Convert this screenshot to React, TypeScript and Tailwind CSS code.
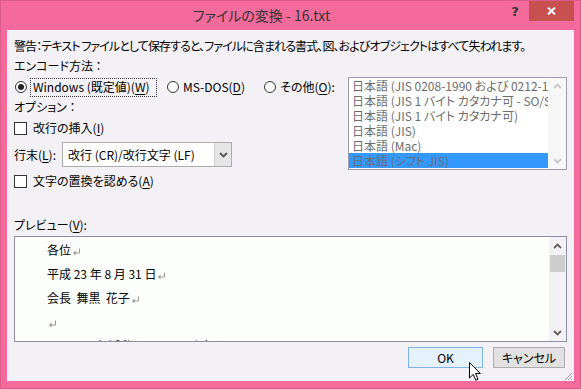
import React from 'react';

const U = ({ children }: { children: React.ReactNode }) => (
  <span className="underline underline-offset-[2px]">{children}</span>
);

const Radio = ({ checked }: { checked?: boolean }) => (
  <span className="w-[12px] h-[12px] rounded-full border border-[#333] bg-white flex items-center justify-center shrink-0">
    {checked && <span className="w-[6px] h-[6px] rounded-full bg-[#222]" />}
  </span>
);

const Check = () => <span className="w-[13px] h-[13px] border border-[#333] bg-white shrink-0" />;

const Chevron = ({ up, color }: { up?: boolean; color: string }) => (
  <svg width="9" height="6" viewBox="0 0 9 6" className={up ? '' : 'rotate-180'}>
    <path d="M1 5 L4.5 1.5 L8 5" fill="none" stroke={color} strokeWidth="1.8" />
  </svg>
);

const Ret = () => (
  <svg width="9" height="8" viewBox="0 0 9 8" className="inline-block ml-[1px] align-[-1px]">
    <path d="M7.5 0.5 V5 H1.5" fill="none" stroke="#999" strokeWidth="1" />
    <path d="M1 5 L3.5 2.5 V7.5 Z" fill="#999" />
  </svg>
);

const encodings = [
  '日本語 (JIS 0208-1990 および 0212-1990)',
  '日本語 (JIS 1 バイト カタカナ可 - SO/SI)',
  '日本語 (JIS 1 バイト カタカナ可)',
  '日本語 (JIS)',
  '日本語 (Mac)',
  '日本語 (シフト JIS)',
];

export default function App() {
  return (
    <div className="w-[581px] h-[389px] bg-[#f36a9b] border border-[#dc5a8a] flex flex-col relative overflow-hidden font-['Noto_Sans_CJK_JP',sans-serif] [font-feature-settings:'palt'] text-[12px] text-black">
      {/* title bar */}
      <div className="h-[29px] flex items-start shrink-0">
        <div className="flex-1 h-full pl-[14px] flex items-center justify-center text-[14px] text-[#333]">
          ファイルの変換 - 16.txt
        </div>
        <div className="w-[14px] h-[22px] mr-[7px] flex items-center justify-center font-['DejaVu_Sans',sans-serif] font-bold text-[13px] text-[#333]">
          ?
        </div>
        <div className="w-[45px] h-[20px] mr-[6px] bg-[#c75050] flex items-center justify-center">
          <svg width="9" height="8" viewBox="0 0 9 8">
            <path d="M1 0.5 L8 7.5 M8 0.5 L1 7.5" stroke="white" strokeWidth="2" />
          </svg>
        </div>
      </div>

      {/* client */}
      <div className="mx-[6px] h-[351px] bg-[#f3f1f5] px-[7px] pt-[8px] flex flex-col relative">
        <div className="h-[16px] leading-[16px] whitespace-nowrap tracking-[-0.9px]">
          警告：テキスト ファイルとして保存すると、ファイルに含まれる書式、図、およびオブジェクトはすべて失われます。
        </div>
        <div className="mt-[4px] h-[16px] leading-[16px]">エンコード方法 ：</div>

        <div className="mt-[3px] flex">
          <div className="flex-1 pt-[2px] flex flex-col">
            <div className="h-[16px] flex items-center">
              <span className="ml-[1px]">
                <Radio checked />
              </span>
              <span className="ml-[3px] w-[127px] h-[19px] border border-dotted border-[#333] px-[2px] flex items-center whitespace-nowrap">
                <span>
                  Windows (既定値)(<U>W</U>)
                </span>
              </span>
              <span className="ml-[10px] w-[97px] flex items-center gap-[4px] whitespace-nowrap">
                <Radio />
                <span>
                  MS-DOS(<U>D</U>)
                </span>
              </span>
              <span className="flex items-center gap-[4px] whitespace-nowrap">
                <Radio />
                <span>
                  その他(<U>O</U>):
                </span>
              </span>
            </div>
            <div className="mt-[4px] h-[16px] leading-[16px]">オプション ：</div>
            <div className="mt-[5px] h-[16px] flex items-center gap-[6px]">
              <Check />
              <span>
                改行の挿入(<U>I</U>)
              </span>
            </div>
            <div className="mt-[6px] h-[25px] flex items-center">
              <span className="w-[48px]">
                行末(<U>L</U>):
              </span>
              <div className="w-[170px] h-[25px] border border-[#acacac] bg-white flex">
                <span className="flex-1 pl-[5px] flex items-center whitespace-nowrap">改行 (CR)/改行文字 (LF)</span>
                <span className="w-[17px] bg-[#e5e5e5] border-l border-[#d0d0d0] flex items-center justify-center">
                  <Chevron color="#555" />
                </span>
              </div>
            </div>
            <div className="mt-[6px] h-[16px] flex items-center gap-[6px]">
              <Check />
              <span>
                文字の置換を認める(<U>A</U>)
              </span>
            </div>
          </div>

          <div className="w-[219px] h-[93px] border border-[#9b9bab] bg-white flex">
            <div className="flex-1 min-w-0 overflow-hidden">
              {encodings.map((e, i) => (
                <div
                  key={e}
                  className={`h-[15px] leading-[15px] pl-[3px] whitespace-nowrap overflow-hidden text-[#6d6d6d] ${i === encodings.length - 1 ? 'bg-[#3399ff]' : ''}`}
                >
                  {e}
                </div>
              ))}
            </div>
            <div className="w-[18px] shrink-0 bg-[#f7f7f7] flex flex-col items-center justify-between py-[5px]">
              <Chevron up color="#c8c8c8" />
              <Chevron color="#c8c8c8" />
            </div>
          </div>
        </div>

        <div className="mt-[28px] h-[16px] leading-[16px]">
          プレビュー(<U>V</U>):
        </div>
        <div className="mt-[3px] h-[106px] border border-[#8d8ea3] bg-[#fdfffd] flex">
          <div className="flex-1 overflow-hidden pl-[32px] pt-[1px] leading-[24px] whitespace-pre [font-feature-settings:normal]">
            <div>
              各位<Ret />
            </div>
            <div>
              平成 23 年 8 月 31 日<Ret />
            </div>
            <div>
              会長  舞黒  花子<Ret />
            </div>
            <div>
              <Ret />
            </div>
            <div>
              ｌｔ 画    部活動についてのお知らせ<Ret />
            </div>
          </div>
          <div className="w-[17px] bg-[#f3f1f5] flex flex-col">
            <div className="h-[18px] flex items-center justify-center">
              <Chevron up color="#606060" />
            </div>
            <div className="h-[17px] mx-[1px] bg-[#cdcdcd]" />
            <div className="flex-1" />
            <div className="h-[17px] flex items-center justify-center">
              <Chevron color="#606060" />
            </div>
          </div>
        </div>

        <div className="mt-[5px] h-[21px] flex justify-end pr-[2px] gap-[10px]">
          <button className="w-[75px] h-[21px] bg-[#e5f1fb] border border-[#7eb4ea] flex items-center justify-center">
            OK
          </button>
          <button className="w-[72px] h-[21px] bg-[#e1e1e1] border border-[#adadad] flex items-center justify-center">
            キャンセル
          </button>
        </div>

        {/* size grip */}
        <svg width="9" height="9" viewBox="0 0 9 9" className="absolute right-[1px] bottom-0">
          <path d="M8 1 L1 8 M8 4 L4 8 M8 7 L7 8" stroke="#a0a0a0" strokeWidth="1" />
        </svg>
      </div>

      {/* mouse cursor */}
      <svg width="12" height="19" viewBox="0 0 12 19" className="absolute left-[468px] top-[361px]">
        <path d="M0.5 0.5 V16 L4.2 12.4 L6.8 18.2 L9 17.2 L6.5 11.5 H11.3 Z" fill="white" stroke="black" strokeWidth="1" />
      </svg>
    </div>
  );
}
